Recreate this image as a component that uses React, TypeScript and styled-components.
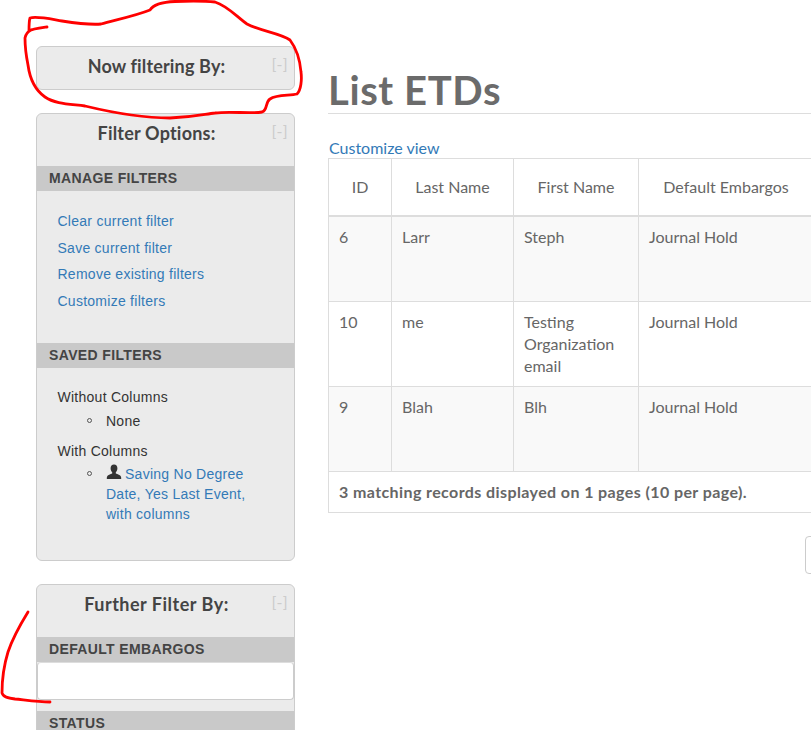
import React from "react";
import styled, { createGlobalStyle } from "styled-components";

const Global = createGlobalStyle`
  html, body { margin: 0; padding: 0; background: #fff; overflow: hidden; }
  body { height: 730px; font-family: "Liberation Sans", Arial, sans-serif; font-size: 14px; color: #333; letter-spacing: 0.26px; }
`;

const Page = styled.div`
  position: relative;
  width: 811px;
  height: 730px;
  overflow: hidden;
  display: flex;
  align-items: flex-start;
  padding-left: 36px;
  box-sizing: border-box;
`;

const Sidebar = styled.aside`
  flex: none;
  width: 259px;
  padding-top: 46px;
  display: flex;
  flex-direction: column;
  gap: 23px;
`;

const Panel = styled.section<{ $h: number }>`
  position: relative;
  box-sizing: border-box;
  height: ${(p) => p.$h}px;
  flex: none;
  background: #ebebeb;
  border: 1px solid #ccc;
  border-radius: 6px;
`;

const PanelTitle = styled.h3<{ $pad: number; $track: number }>`
  margin: 0;
  height: ${(p) => p.$pad}px;
  padding: 7px 18px 0 0;
  box-sizing: border-box;
  text-align: center;
  font: 700 18px/24px Lato, "Noto Sans", sans-serif;
  color: #444;
  letter-spacing: ${(p) => p.$track}px;
`;

const Collapse = styled.span`
  position: absolute;
  top: 6px;
  right: 6px;
  font: 400 16px/22px Lato, sans-serif;
  color: #ccc;
`;

const SectionHead = styled.h4`
  margin: 0;
  height: 25px;
  padding-left: 12px;
  background: #c9c9c9;
  font: 700 14px/24px "Liberation Sans", Arial, sans-serif;
  letter-spacing: 0.36px;
  color: #444;
`;

const LinkList = styled.div<{ $h: number }>`
  height: ${(p) => p.$h}px;
  padding: 20px 0 0 20.5px;
  box-sizing: border-box;
  display: flex;
  flex-direction: column;
  gap: 6.6px;
`;

const SideLink = styled.a`
  font: 400 14px/20px "Liberation Sans", Arial, sans-serif;
  color: #337ab7;
`;

const Saved = styled.div`
  padding: 19px 0 0 20.5px;
  line-height: 20px;
`;

const GroupName = styled.div`
  margin-bottom: 4px;
`;

const SavedList = styled.ul`
  margin: 0 0 10px;
  padding: 0 0 0 48.5px;
  list-style: none;
  width: 155px;
  box-sizing: content-box;
`;

const SavedItem = styled.li<{ $lift?: number }>`
  position: relative;
  margin-top: ${(p) => -(p.$lift ?? 0)}px;
  &::before {
    content: "";
    position: absolute;
    left: -19px;
    top: 7px;
    width: 3px;
    height: 3px;
    border: 1px solid #555;
    border-radius: 50%;
  }
`;

const UserIcon = styled.svg`
  width: 16px;
  height: 16px;
  vertical-align: -1px;
  margin-right: 3px;
  fill: #333;
`;

const EmptyBox = styled.div`
  margin: 0 0 11px;
  background: #fff;
  border: 1px solid #ccc;
  border-top-color: #ddd;
  border-radius: 4px;
  height: 36px;
`;

const Main = styled.main`
  flex: none;
  width: 700px;
  margin-left: 33px;
`;

const Title = styled.h1`
  margin: 0;
  padding: 65px 0 0;
  height: 114px;
  box-sizing: border-box;
  border-bottom: 1px solid #ddd;
  font: 700 40px/50px Lato, "Noto Sans", sans-serif;
  color: #6b6b6b;
  letter-spacing: 0.6px;
`;

const Customize = styled.a`
  display: block;
  margin: 24px 0 0 1px;
  height: 20px;
  font: 400 16px/19px Lato, "Noto Sans", sans-serif;
  letter-spacing: 0;
  color: #337ab7;
`;

const Table = styled.table`
  width: 700px;
  table-layout: fixed;
  border-collapse: collapse;
  font: 400 16px/22px Lato, "Noto Sans", sans-serif;
  letter-spacing: 0;
  color: #666;
`;

const Th = styled.th<{ $w?: number }>`
  ${(p) => (p.$w ? `width: ${p.$w}px;` : "")}
  height: 57px;
  box-sizing: border-box;
  border: 1px solid #ddd;
  border-bottom-width: 2px;
  font-weight: 400;
  text-align: center;
  padding: 0 10px;
`;

const Row = styled.tr`
  &:nth-child(odd) { background: #f9f9f9; }
  &:first-child td { height: 86px; }
`;

const Td = styled.td`
  height: 85px;
  box-sizing: border-box;
  border: 1px solid #ddd;
  padding: 9px 10px 0;
  vertical-align: top;
`;

const Foot = styled.td`
  height: 41px;
  box-sizing: border-box;
  border: 1px solid #ddd;
  padding: 0 10px;
  font-weight: 700;
  letter-spacing: 0.4px;
`;

const Pager = styled.div`
  margin: 23px 0 0 477px;
  width: 40px;
  height: 38px;
  box-sizing: border-box;
  border: 1px solid #ccc;
  border-radius: 4px;
`;

const Ink = styled.svg`
  position: absolute;
  left: 0;
  top: 0;
  width: 811px;
  height: 730px;
  pointer-events: none;
  fill: none;
  stroke: #f00;
  stroke-width: 2.8;
  stroke-linecap: round;
  stroke-linejoin: round;
`;

const rows = [
  ["6", "Larr", "Steph", "Journal Hold", ""],
  ["10", "me", "Testing Organization email", "Journal Hold", ""],
  ["9", "Blah", "Blh", "Journal Hold", ""],
];

export default function App() {
  return (
    <Page>
      <Global />
      <Sidebar>
        <Panel $h={44}>
          <PanelTitle $pad={42} $track={0.15}>Now filtering By:</PanelTitle>
          <Collapse>[-]</Collapse>
        </Panel>
        <Panel $h={448}>
          <PanelTitle $pad={52} $track={0.2}>Filter Options:</PanelTitle>
          <Collapse>[-]</Collapse>
          <SectionHead>MANAGE FILTERS</SectionHead>
          <LinkList $h={152}>
            <SideLink>Clear current filter</SideLink>
            <SideLink>Save current filter</SideLink>
            <SideLink>Remove existing filters</SideLink>
            <SideLink>Customize filters</SideLink>
          </LinkList>
          <SectionHead>SAVED FILTERS</SectionHead>
          <Saved>
            <GroupName>Without Columns</GroupName>
            <SavedList>
              <SavedItem>None</SavedItem>
            </SavedList>
            <GroupName>With Columns</GroupName>
            <SavedList>
              <SavedItem $lift={1}>
                <UserIcon viewBox="0 0 16 16">
                  <path d="M8 0.5c-2.2 0-3.4 1.6-3.4 3.8 0 1.6.6 3 1.6 3.9v1.3c-1.6.7-4.7 1.6-5.2 3.2-.2.6-.2 1.5-.2 2.3h14.4c0-.8 0-1.7-.2-2.3-.5-1.6-3.6-2.5-5.2-3.2V8.2c1-.9 1.6-2.3 1.6-3.9C11.4 2.1 10.2.5 8 .5z" />
                </UserIcon>
                <SideLink>Saving No Degree Date, Yes Last Event, with columns</SideLink>
              </SavedItem>
            </SavedList>
          </Saved>
        </Panel>
        <Panel $h={200}>
          <PanelTitle $pad={52} $track={0.5}>Further Filter By:</PanelTitle>
          <Collapse>[-]</Collapse>
          <SectionHead>DEFAULT EMBARGOS</SectionHead>
          <EmptyBox />
          <SectionHead>STATUS</SectionHead>
        </Panel>
      </Sidebar>
      <Main>
        <Title>List ETDs</Title>
        <Customize>Customize view</Customize>
        <Table>
          <thead>
            <tr>
              <Th $w={63}>ID</Th>
              <Th $w={122}>Last Name</Th>
              <Th $w={125}>First Name</Th>
              <Th $w={175}>Default Embargos</Th>
              <Th />
            </tr>
          </thead>
          <tbody>
            {rows.map((r) => (
              <Row key={r[0]}>
                {r.map((c, i) => (
                  <Td key={i}>{c}</Td>
                ))}
              </Row>
            ))}
          </tbody>
          <tfoot>
            <tr>
              <Foot colSpan={5}>3 matching records displayed on 1 pages (10 per page).</Foot>
            </tr>
          </tfoot>
        </Table>
        <Pager />
      </Main>
      <Ink viewBox="0 0 811 730">
        <path d="M47 27C40 28 32 29 29 31C29 26 29 21 30 18C37 16 50 19 62 21C75 23 90 25 101 24C115 20 135 16 150 10C153 5 163 2 175 1.500C190 1 205 1 215 2C228 6 238 18 247 24C260 31 280 33 290 40C296 48 300 60 301 72C302 80 301 90 297 94C290 96 277 94 270 99C265 102 268 110 262 112C250 114 230 111 215 113C205 114 195 117 170 118C140 118 110 112 85 106C70 104 55 104 45 97C35 90 30 80 28 65C26 55 25 45 25 38C26 33 29 31 31 30" />
        <path d="M28 612C20 625 12 640 8 652C4 665 2 680 2 693C3 697 8 698 15 699C25 700 38 702 50 702" />
      </Ink>
    </Page>
  );
}
